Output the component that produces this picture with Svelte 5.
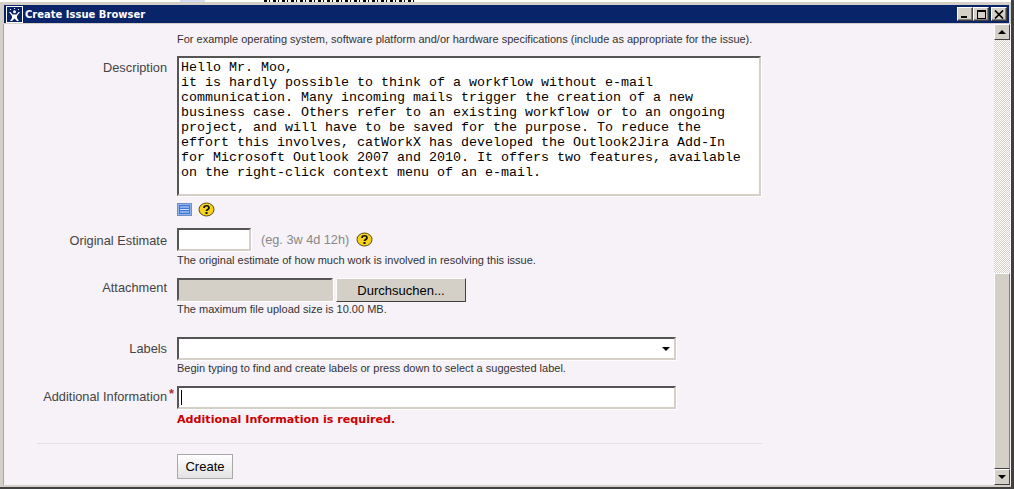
<script>
  // Fields of the issue form, top to bottom
  const descriptionText = `Hello Mr. Moo,
it is hardly possible to think of a workflow without e-mail
communication. Many incoming mails trigger the creation of a new
business case. Others refer to an existing workflow or to an ongoing
project, and will have to be saved for the purpose. To reduce the
effort this involves, catWorkX has developed the Outlook2Jira Add-In
for Microsoft Outlook 2007 and 2010. It offers two features, available
on the right-click context menu of an e-mail.`;
</script>

{#snippet help()}
  <svg class="help" width="17" height="15" viewBox="0 0 17 15">
    <ellipse cx="8.500" cy="7.500" rx="7.500" ry="6.500" fill="#f7d21f" stroke="#5c4c0c" />
    <path d="M6 6c0-3 5-3 5 0 0 1.500-2.500 1.500-2.500 3" fill="none" stroke="#111" stroke-width="1.700" />
    <rect x="7.500" y="10" width="2" height="2" fill="#111" />
  </svg>
{/snippet}

<div class="window">
  <div class="behind">
    <span class="strip"></span>
    <span class="sliver"></span>
  </div>
  <header class="titlebar">
    <svg class="appicon" width="17" height="17" viewBox="0 0 17 17">
      <rect x="0.500" y="0.500" width="16" height="16" fill="#0a246a" stroke="#fff" />
      <path d="M3 6h1.500l2 2.500h4l2-2.500H14l-3 4v2l2 3h-2l-2.500-2.500L6 15H4l2-3v-2z" fill="#fff" />
      <circle cx="8.500" cy="5.800" r="1.500" fill="#fff" />
      <path d="M4 3h1v1H4zM8 2h1v1H8zM12 3h1v1h-1z" fill="#fff" />
    </svg>
    <span class="title">Create Issue Browser</span>
    <div class="controls">
      <button class="ctl" aria-label="Minimize"><span class="min"></span></button>
      <button class="ctl" aria-label="Maximize"><span class="max"></span></button>
      <button class="ctl close" aria-label="Close">
        <svg width="10" height="9" viewBox="0 0 10 9"><path d="M1 0.500l8 8M9 0.500l-8 8" fill="none" stroke="#000" stroke-width="1.700" /></svg>
      </button>
    </div>
  </header>

  <div class="client">
    <main class="form">
      <div class="row env-desc">
        <div class="label"></div>
        <p class="hint top">For example operating system, software platform and/or hardware specifications (include as appropriate for the issue).</p>
      </div>

      <div class="row description">
        <label class="label" for="desc">Description</label>
        <div class="field">
          <textarea id="desc" spellcheck="false" readonly value={descriptionText}></textarea>
          <div class="tools">
            <svg width="15" height="13" viewBox="0 0 15 13">
              <rect x="0.500" y="0.500" width="14" height="12" fill="#8fb4ea" stroke="#6f8fc4" />
              <rect x="2" y="2" width="11" height="9" fill="#3f78d8" />
              <path d="M3 4h9M3 6.500h9M3 9h9" stroke="#cfe0f8" />
            </svg>
            {@render help()}
          </div>
        </div>
      </div>

      <div class="row estimate">
        <label class="label" for="est">Original Estimate</label>
        <div class="field">
          <div class="inline">
            <input id="est" class="sunken small" />
            <span class="eg">(eg. 3w 4d 12h)</span>
            {@render help()}
          </div>
          <p class="hint">The original estimate of how much work is involved in resolving this issue.</p>
        </div>
      </div>

      <div class="row attachment">
        <span class="label">Attachment</span>
        <div class="field">
          <div class="file">
            <div class="sunken path"></div>
            <button class="browse">Durchsuchen...</button>
          </div>
          <p class="hint">The maximum file upload size is 10.00 MB.</p>
        </div>
      </div>

      <div class="row labels">
        <label class="label" for="lab">Labels</label>
        <div class="field">
          <div class="combo">
            <input id="lab" class="sunken wide" />
            <span class="arrow"></span>
          </div>
          <p class="hint">Begin typing to find and create labels or press down to select a suggested label.</p>
        </div>
      </div>

      <div class="row additional">
        <label class="label" for="add">Additional Information<span class="req">*</span></label>
        <div class="field">
          <div class="sunken wide caret-box"><span class="caret"></span></div>
          <p class="error">Additional Information is required.</p>
        </div>
      </div>

      <div class="actions">
        <button class="create">Create</button>
      </div>
    </main>

    <aside class="scrollbar">
      <div class="sb-btn"><span class="up"></span></div>
      <div class="sb-track"></div>
      <div class="sb-thumb"></div>
      <div class="sb-btn"><span class="down"></span></div>
    </aside>
  </div>
</div>

<style>
  :global(body) {
    margin: 0;
    padding: 0;
    background-color: #fff;
    overflow: hidden;
  }

  .window {
    width: 1014px;
    height: 489px;
    box-sizing: border-box;
    display: flex;
    flex-direction: column;
    background: #d4d0c8;
    font-family: "Liberation Sans", Arial, sans-serif;
    border-right: 3px solid #404040;
    border-bottom: 2px solid #404040;
    overflow: hidden;
  }

  .behind {
    height: 2px;
    background: #fff;
    flex: none;
    display: flex;
  }

  .strip {
    width: 25px;
    margin-left: 180px;
    background: #d5dff0;
  }

  .sliver {
    width: 152px;
    margin-left: 59px;
    background: repeating-linear-gradient(90deg, #000 0 3px, #fff 3px 5px, #000 5px 6px, #fff 6px 9px);
  }

  .titlebar {
    flex: none;
    height: 18px;
    margin: 3px 2px 1px 4px;
    padding-left: 2px;
    background: #0a246a;
    display: flex;
    align-items: center;
    color: #fff;
  }

  .appicon { flex: none; }

  .title {
    margin-left: 2px;
    font-family: "DejaVu Sans", sans-serif;
    font-size: 10px;
    font-weight: bold;
  }

  .controls {
    margin-left: auto;
    display: flex;
    padding-right: 2px;
  }

  .ctl {
    width: 16px;
    height: 14px;
    padding: 0;
    margin: 0;
    background: #d4d0c8;
    border: 1px solid;
    border-color: #fff #404040 #404040 #fff;
    box-shadow: inset -1px -1px 0 #808080;
    display: flex;
    align-items: center;
    justify-content: center;
  }

  .ctl.close { margin-left: 2px; }

  .min {
    width: 6px;
    height: 2px;
    background: #000;
    margin: 6px 3px 0 0;
  }

  .max {
    width: 7px;
    height: 6px;
    border: 1px solid #000;
    border-top-width: 2px;
  }

  .client {
    flex: 1;
    min-height: 0;
    margin: 0 0 2px 3px;
    display: flex;
    background: #f6f2f7;
    border-left: 1px solid #a8a6a0;
  }

  .form {
    flex: 1;
    min-width: 0;
    font-size: 13px;
    color: #333;
  }

  .row {
    display: flex;
    align-items: flex-start;
  }

  .label {
    width: 163px;
    flex: none;
    margin-right: 10px;
    text-align: right;
    color: #444;
    position: relative;
    font-size: 12.800px;
  }

  .field { flex: none; }

  p { margin: 0; }

  .hint {
    font-size: 11px;
    line-height: 13px;
    color: #333;
  }

  .hint.top { margin-top: 9px; }

  .description { margin-top: 10px; }
  .description .label { padding-top: 4px; }

  textarea {
    display: block;
    width: 584px;
    height: 140px;
    box-sizing: border-box;
    padding: 2px 2px;
    margin: 0;
    border: 2px solid;
    border-color: #555 #d4d0c8 #d4d0c8 #555;
    box-shadow: 1px 1px 0 #fff;
    resize: none;
    overflow: hidden;
    font-family: "Liberation Mono", "Courier New", monospace;
    font-size: 13.333px;
    line-height: 15px;
    color: #000;
    background: #fff;
  }

  .tools {
    display: flex;
    align-items: center;
    gap: 6px;
    height: 16px;
    margin-top: 5px;
  }

  .estimate { margin-top: 11px; }
  .estimate .label { padding-top: 5px; }

  .inline {
    display: flex;
    align-items: center;
  }

  .sunken {
    box-sizing: border-box;
    margin: 0;
    padding: 0;
    height: 23px;
    border: 2px solid;
    border-color: #555 #d4d0c8 #d4d0c8 #555;
    box-shadow: 1px 1px 0 #fff;
    background: #fff;
    display: block;
  }

  .small { width: 74px; }
  .wide { width: 499px; }

  .eg {
    margin-left: 10px;
    margin-right: 7px;
    color: #888;
    font-size: 12.700px;
  }

  .estimate .hint { margin-top: 3px; }

  .attachment { margin-top: 11px; }
  .attachment .label { padding-top: 2px; }

  .file { display: flex; }

  .path {
    width: 156px;
    height: 23px;
    background: #d4d0c8;
  }

  .browse {
    width: 130px;
    height: 24px;
    margin: 0 0 0 3px;
    padding: 0;
    background: #d4d0c8;
    border: 1px solid;
    border-color: #fff #404040 #404040 #fff;
    font-family: "Liberation Sans", Arial, sans-serif;
    font-size: 13px;
    color: #000;
  }

  .attachment .hint { margin-top: 1px; }

  .labels { margin-top: 21px; }
  .labels .label { padding-top: 4px; }

  .combo { position: relative; }

  .arrow {
    position: absolute;
    right: 6px;
    top: 10px;
    border-left: 4px solid transparent;
    border-right: 4px solid transparent;
    border-top: 4px solid #000;
  }

  .labels .hint { margin-top: 2px; }

  .additional { margin-top: 11px; }
  .additional .label { padding-top: 3px; }

  .req {
    position: absolute;
    right: -7px;
    top: 0;
    color: #a33;
    font-weight: bold;
  }

  .caret-box {
    display: flex;
    align-items: center;
    padding-left: 2px;
  }

  .caret {
    width: 1px;
    height: 15px;
    background: #000;
  }

  .error {
    margin-top: 2px;
    font-family: "DejaVu Sans", sans-serif;
    font-size: 11.140px;
    font-weight: bold;
    color: #c00;
    line-height: 17px;
  }

  .actions {
    margin: 15px 0 0 33px;
    width: 725px;
    border-top: 1px solid #e3dfe4;
    padding: 10px 0 0 140px;
    box-sizing: border-box;
  }

  .create {
    width: 56px;
    height: 25px;
    padding: 0;
    background: linear-gradient(#fff, #e2e2e2);
    border: 1px solid #a9a9a9;
    font-family: "Liberation Sans", Arial, sans-serif;
    font-size: 13px;
    color: #000;
  }

  .scrollbar {
    flex: none;
    width: 16px;
    margin-right: 1px;
    display: flex;
    flex-direction: column;
    background: #d4d0c8;
  }

  .sb-btn {
    height: 16px;
    flex: none;
    box-sizing: border-box;
    border: 1px solid;
    border-color: #fff #404040 #404040 #fff;
    display: flex;
    align-items: center;
    justify-content: center;
  }

  .up {
    border-left: 4px solid transparent;
    border-right: 4px solid transparent;
    border-bottom: 4px solid #000;
  }

  .down {
    border-left: 4px solid transparent;
    border-right: 4px solid transparent;
    border-top: 4px solid #000;
  }

  .sb-track {
    height: 233px;
    flex: none;
    background-color: #fff;
    background-image: conic-gradient(#d4d0c8 25%, #fff 0 50%, #d4d0c8 0 75%, #fff 0);
    background-size: 2px 2px;
  }

  .sb-thumb {
    flex: 1;
    border: 1px solid;
    border-color: #fff #808080 #404040 #fff;
  }
</style>
